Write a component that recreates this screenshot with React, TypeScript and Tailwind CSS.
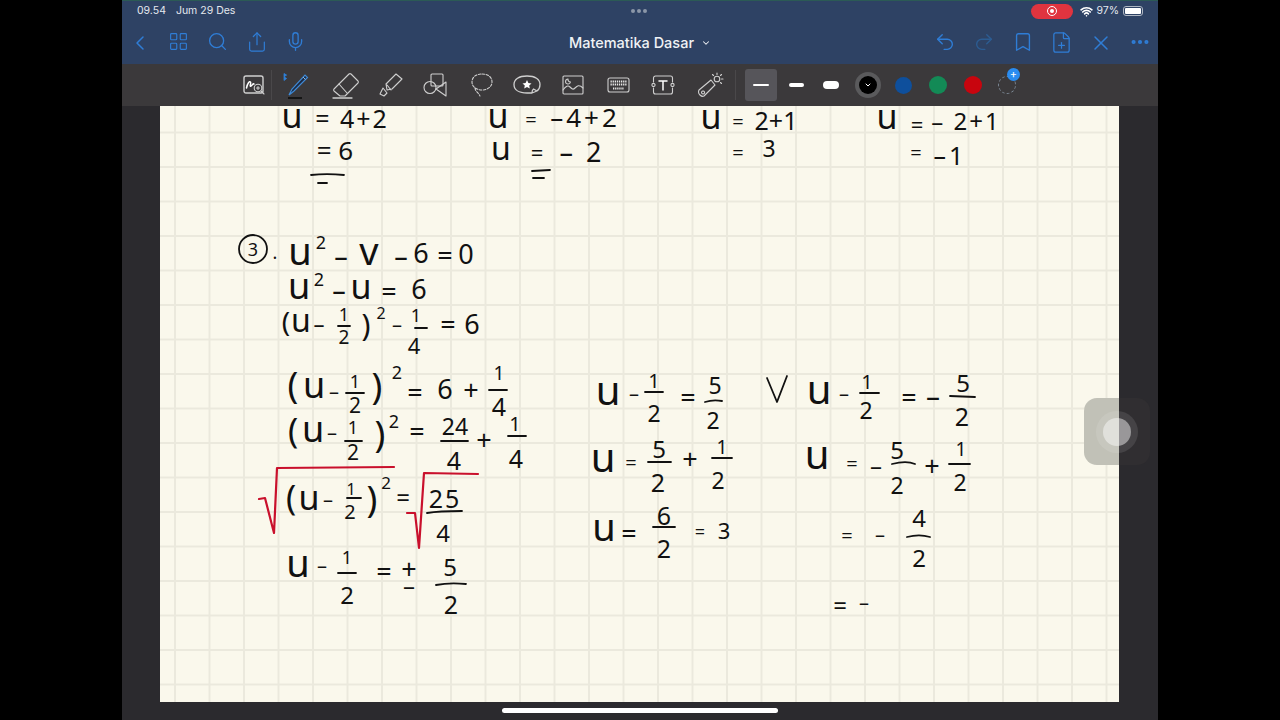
import type { ReactNode } from "react";
import { Bookmark, ChevronDown, ChevronLeft, Ellipsis, FilePlus, LayoutGrid, Mic, Redo2, Search, Share, Undo2, Wifi, X } from "lucide-react";

// one handwritten piece on the note, placed by its centre
function T({ c, children }: { c: string; children: ReactNode }) {
  return <span className={"absolute -translate-x-1/2 -translate-y-1/2 leading-none whitespace-nowrap " + c}>{children}</span>;
}

function NavSlot({ children }: { children: ReactNode }) {
  return <div className="flex w-[39px] justify-center">{children}</div>;
}

function ToolIcons() {
  const s = { fill: "none", stroke: "#cfcfcf", strokeWidth: 1.1, strokeLinecap: "round", strokeLinejoin: "round" } as const;
  return (
    <div className="flex h-[42px] items-center bg-[#3b393b] pl-[122px]">
      {/* zoom box */}
      <svg width="22" height="22" viewBox="0 0 22 22" className="ml-[-1px]" {...s}>
        <rect x="1" y="2" width="19" height="17" rx="2" strokeWidth="1.4" />
        <path d="M3.5 14c1-5 3-7 4-6s-1.5 5 .5 4 2-3 3-2" stroke="#fff" strokeWidth="1.5" />
        <circle cx="15" cy="14" r="3.8" fill="#3b393b" />
        <path d="M13.5 14h3M15 12.5v3M18 17l3 3" />
      </svg>
      <div className="ml-[6px] h-[30px] w-px bg-[#4a484a]" />
      {/* pen */}
      <svg width="30" height="30" viewBox="0 0 30 30" className="ml-[9px]" fill="none">
        <path d="M3 3.500v7l2.600-2-2.600-1.800 2.600-1.600z" fill="#2f80d8" stroke="#2f80d8" strokeWidth="0.8" />
        <path d="M8 25 11 19 24 5l2.500 2.500L13 21z" fill="#1b2a44" stroke="#3f8ad6" strokeWidth="1.2" />
        <path d="M22 7l2.500 2.500" stroke="#8fb8e0" strokeWidth="1" />
        <path d="M7 28h14" stroke="#0d0d0d" strokeWidth="1.6" />
      </svg>
      {/* eraser */}
      <svg width="28" height="28" viewBox="0 0 28 28" className="ml-[21px]" {...s}>
        <path d="M2 18 17 3a1.500 1.500 0 0 1 2 0l7 7a1.500 1.500 0 0 1 0 2L13 25H8l-6-5a1.500 1.500 0 0 1 0-2z" />
        <path d="M7 13l8 9" />
        <path d="M1 27h19" strokeWidth="1.3" />
      </svg>
      {/* highlighter */}
      <svg width="26" height="26" viewBox="0 0 26 26" className="ml-[18px]" {...s}>
        <path d="M8 12 18 2l6 5-10 10-5 1zM9 13l4 5M5 16l4 5-3 3-4-2z" />
      </svg>
      {/* shapes */}
      <svg width="25" height="24" viewBox="0 0 25 24" className="ml-[19px]" {...s}>
        <rect x="8" y="1" width="12" height="12" rx="1" />
        <circle cx="7" cy="14.500" r="6" />
        <path d="M23 9v14l-10-7z" />
      </svg>
      {/* lasso */}
      <svg width="24" height="26" viewBox="0 0 24 26" className="ml-[22px]" {...s} strokeDasharray="2.5 1.6">
        <path d="M12 2c6 0 10 3 10 8s-5 8-10 8-10-3-10-8 4-8 10-8zM5 16c0 3 3 4 5 8" />
      </svg>
      {/* sticker */}
      <svg width="28" height="22" viewBox="0 0 28 22" className="ml-[19px]" {...s}>
        <path d="M24 17c2-1.500 3-4 3-6.500C27 5 22 2 14 2S1 5 1 10.500 6 19 14 19h5zM24 17l-5 2c0-2 0-3 1.500-4z" strokeWidth="1.3" />
        <path d="m14 6 1.400 3 3.100.4-2.300 2.100.6 3.100-2.800-1.500-2.800 1.500.6-3.100-2.300-2.100 3.100-.4z" fill="#fff" stroke="none" />
      </svg>
      {/* image */}
      <svg width="22" height="20" viewBox="0 0 22 20" className="ml-[21px]" {...s}>
        <rect x="1" y="1" width="20" height="18" rx="1" />
        <path d="M1 15c3-4 5-5 7-3s3 3 5 1 4-4 8 0M6 4a2.500 2.500 0 1 0 2.500 3A2.500 2.500 0 0 1 6 4z" />
      </svg>
      {/* keyboard */}
      <svg width="23" height="16" viewBox="0 0 23 16" className="ml-[23px]" {...s}>
        <rect x="1" y="1" width="21" height="14" rx="2" />
        <path d="M3.500 4.500h16M3.500 7.500h16M6 11.500h11" stroke="#e8e8e8" strokeWidth="1.8" strokeDasharray="1.3 .8" strokeLinecap="butt" />
      </svg>
      {/* text box */}
      <svg width="24" height="20" viewBox="0 0 24 20" className="ml-[21px]" {...s}>
        <path d="M2.500 7V3a2 2 0 0 1 2-2h15a2 2 0 0 1 2 2v4M2.500 13v4a2 2 0 0 0 2 2h15a2 2 0 0 0 2-2v-4" />
        <circle cx="2.500" cy="10" r="1.600" />
        <circle cx="21.500" cy="10" r="1.600" />
        <path d="M8 6h8M12 6v9" stroke="#fff" strokeWidth="1.5" />
      </svg>
      {/* laser */}
      <svg width="27" height="26" viewBox="0 0 27 26" className="ml-[22px]" {...s}>
        <path d="M2 18 14 8l4 5L7 24c-2 1-3 0-4-1s-2-3-1-5zM6 19a1.500 1.500 0 1 0 .1 0z" />
        <circle cx="20" cy="7" r="2.800" />
        <path d="M20 1v1.500M26 7h-1.500M24.500 2.500l-1 1M24.500 11.500l-1-1M15.500 2.500l1 1" />
      </svg>
      <div className="ml-[11px] h-[30px] w-px bg-[#4a484a]" />
      {/* stroke widths */}
      <div className="ml-[9px] flex h-[32px] w-[32px] items-center justify-center rounded-[3px] bg-[#56555a]">
        <div className="h-[2px] w-[16px] rounded-full bg-white" />
      </div>
      <div className="ml-[12px] h-[4px] w-[15px] rounded-full bg-white" />
      <div className="ml-[19px] h-[8px] w-[16px] rounded-full bg-white" />
      {/* colours */}
      <div className="ml-[16px] flex h-[26px] w-[26px] items-center justify-center rounded-full bg-[#5a5a5c]">
        <div className="flex h-[18px] w-[18px] items-center justify-center rounded-full bg-black">
          <ChevronDown size={8} strokeWidth={3} className="text-white" />
        </div>
      </div>
      <div className="ml-[14px] h-[17px] w-[17px] rounded-full bg-[#0e4f9c]" />
      <div className="ml-[17px] h-[18px] w-[18px] rounded-full bg-[#138a56]" />
      <div className="ml-[17px] h-[18px] w-[18px] rounded-full bg-[#c8050e]" />
      <div className="relative ml-[16px] h-[18px] w-[18px] rounded-full border border-dashed border-[#7d8996]">
        <div className="absolute left-[8px] top-[-9px] flex h-[13px] w-[13px] items-center justify-center rounded-full bg-[#2a8cf0] text-[11px] leading-none text-white">+</div>
      </div>
    </div>
  );
}

function Note() {
  return (
    <div className="relative h-[596px] w-[959px] overflow-hidden bg-[#faf8ec] bg-[linear-gradient(to_right,#ebe9dd_2px,transparent_2px),linear-gradient(to_bottom,#ebe9dd_2px,transparent_2px)] bg-[size:34.5px_34.5px] bg-[position:14px_-9px]">
      {/* layer uses the coordinates of the whole screen */}
      <div className="absolute left-[-160px] top-[-106px] h-[720px] w-[1280px] font-['Noto_Sans',sans-serif] text-[27px] text-[#111]">
        <svg width="1280" height="720" viewBox="0 0 1280 720" fill="none" className="absolute left-0 top-0" strokeLinecap="round" strokeLinejoin="round">
          <g stroke="#111" strokeWidth="1.8">
            <circle cx="253" cy="249" r="14" />
            <path d="M311 175c10-1 22-1 33 0M318 183h9M532 171l18-1M533 178h11" />
            <path d="M338 326h12M415 328h12" />
            <path d="M346 393h18M489 390h18M345 441h17M441 441h27M508 436h18M347 498h14M427 513c12-2 24-2 35-2M338 573h18M436 585c10-2 20-2 30-1" />
            <path d="M645 392h18M705 402c6-2 12-2 17-1M860 393h19M950 396l25 1M648 462h23M712 458h20M892 464c8-2 16-3 23 0M949 464h21M653 527h22M907 537c8-2 16-2 23 0" />
            <path d="M767 378l10 24 10-26" />
          </g>
          <path d="M259 499l6-1 9 35 3-65 117-1M407 513h8l4 35 5-75 54 1" stroke="#c9102c" strokeWidth="2.2" />
        </svg>

        {/* top rows */}
        <T c="left-[292px] top-[115px] text-[34px]">u</T>
        <T c="left-[352px] top-[118px] text-[25px] tracking-[2px]">= 4+2</T>
        <T c="left-[335px] top-[150px] text-[26px]">= 6</T>
        <T c="left-[498px] top-[115px] text-[34px]">u</T>
        <T c="left-[531px] top-[120px] text-[20px]">=</T>
        <T c="left-[585px] top-[117px] text-[26px] tracking-[3px]">–4+2</T>
        <T c="left-[501px] top-[148px] text-[32px]">u</T>
        <T c="left-[537px] top-[152px] text-[22px]">=</T>
        <T c="left-[582px] top-[151px] text-[27px] tracking-[3px]">– 2</T>
        <T c="left-[711px] top-[116px] text-[34px]">u</T>
        <T c="left-[738px] top-[122px] text-[20px]">=</T>
        <T c="left-[776px] top-[120px] text-[25px]">2+1</T>
        <T c="left-[738px] top-[153px] text-[20px]">=</T>
        <T c="left-[769px] top-[148px] text-[23px]">3</T>
        <T c="left-[887px] top-[116px] text-[34px]">u</T>
        <T c="left-[917px] top-[124px] text-[22px]">=</T>
        <T c="left-[966px] top-[121px] text-[24px] tracking-[2px]">– 2+1</T>
        <T c="left-[916px] top-[153px] text-[20px]">=</T>
        <T c="left-[950px] top-[155px] text-[25px] tracking-[3px]">–1</T>

        {/* problem 3 */}
        <T c="left-[253px] top-[249px] text-[18px]">3</T>
        <T c="left-[275px] top-[252px] text-[18px]">.</T>
        <T c="left-[300px] top-[250px] text-[38px]">u</T>
        <T c="left-[321px] top-[242px] text-[18px]">2</T>
        <T c="left-[341px] top-[255px]">–</T>
        <T c="left-[369px] top-[250px] text-[38px]">v</T>
        <T c="left-[401px] top-[255px]">–</T>
        <T c="left-[421px] top-[252px]">6</T>
        <T c="left-[445px] top-[254px]">=</T>
        <T c="left-[466px] top-[253px]">0</T>

        <T c="left-[299px] top-[286px] text-[36px]">u</T>
        <T c="left-[319px] top-[279px] text-[18px]">2</T>
        <T c="left-[339px] top-[289px]">–</T>
        <T c="left-[361px] top-[286px] text-[34px]">u</T>
        <T c="left-[389px] top-[290px]">=</T>
        <T c="left-[419px] top-[288px]">6</T>

        <T c="left-[286px] top-[321px] text-[28px]">(</T>
        <T c="left-[301px] top-[320px] text-[32px]">u</T>
        <T c="left-[319px] top-[323px] text-[22px]">–</T>
        <T c="left-[344px] top-[314px] text-[18px]">1</T>
        <T c="left-[344px] top-[337px] text-[19px]">2</T>
        <T c="left-[366px] top-[325px] text-[30px]">)</T>
        <T c="left-[381px] top-[313px] text-[16px]">2</T>
        <T c="left-[397px] top-[325px] text-[20px]">–</T>
        <T c="left-[416px] top-[315px] text-[18px]">1</T>
        <T c="left-[414px] top-[345px] text-[22px]">4</T>
        <T c="left-[448px] top-[323px]">=</T>
        <T c="left-[472px] top-[323px]">6</T>

        <T c="left-[293px] top-[385px] text-[36px]">(</T>
        <T c="left-[314px] top-[385px] text-[36px]">u</T>
        <T c="left-[334px] top-[392px] text-[20px]">–</T>
        <T c="left-[355px] top-[381px] text-[18px]">1</T>
        <T c="left-[355px] top-[405px] text-[21px]">2</T>
        <T c="left-[377px] top-[386px] text-[36px]">)</T>
        <T c="left-[397px] top-[372px] text-[18px]">2</T>
        <T c="left-[415px] top-[391px]">=</T>
        <T c="left-[445px] top-[388px]">6</T>
        <T c="left-[471px] top-[389px]">+</T>
        <T c="left-[499px] top-[373px] text-[19px]">1</T>
        <T c="left-[499px] top-[406px] text-[25px]">4</T>

        <T c="left-[293px] top-[430px] text-[34px]">(</T>
        <T c="left-[313px] top-[429px] text-[36px]">u</T>
        <T c="left-[332px] top-[433px] text-[20px]">–</T>
        <T c="left-[353px] top-[427px] text-[18px]">1</T>
        <T c="left-[353px] top-[452px] text-[21px]">2</T>
        <T c="left-[380px] top-[434px] text-[36px]">)</T>
        <T c="left-[394px] top-[421px] text-[18px]">2</T>
        <T c="left-[417px] top-[430px]">=</T>
        <T c="left-[455px] top-[426px] text-[23px]">24</T>
        <T c="left-[454px] top-[460px] text-[25px]">4</T>
        <T c="left-[484px] top-[439px]">+</T>
        <T c="left-[515px] top-[424px] text-[20px]">1</T>
        <T c="left-[516px] top-[458px] text-[25px]">4</T>

        <T c="left-[291px] top-[497px] text-[34px]">(</T>
        <T c="left-[309px] top-[497px] text-[34px]">u</T>
        <T c="left-[328px] top-[500px] text-[20px]">–</T>
        <T c="left-[351px] top-[489px] text-[16px]">1</T>
        <T c="left-[350px] top-[512px] text-[20px]">2</T>
        <T c="left-[372px] top-[499px] text-[36px]">)</T>
        <T c="left-[386px] top-[482px] text-[17px]">2</T>
        <T c="left-[403px] top-[497px] text-[24px]">=</T>
        <T c="left-[445px] top-[498px] text-[25px] tracking-[2px]">25</T>
        <T c="left-[443px] top-[533px] text-[24px]">4</T>

        <T c="left-[298px] top-[562px] text-[38px]">u</T>
        <T c="left-[322px] top-[566px] text-[20px]">–</T>
        <T c="left-[347px] top-[557px] text-[18px]">1</T>
        <T c="left-[347px] top-[595px] text-[24px]">2</T>
        <T c="left-[384px] top-[570px]">=</T>
        <T c="left-[409px] top-[568px]">+</T>
        <T c="left-[409px] top-[585px] text-[24px]">–</T>
        <T c="left-[450px] top-[567px] text-[24px]">5</T>
        <T c="left-[451px] top-[604px] text-[25px]">2</T>

        {/* right side */}
        <T c="left-[608px] top-[390px] text-[40px]">u</T>
        <T c="left-[634px] top-[394px] text-[20px]">–</T>
        <T c="left-[654px] top-[381px] text-[20px]">1</T>
        <T c="left-[654px] top-[413px] text-[23px]">2</T>
        <T c="left-[688px] top-[396px]">=</T>
        <T c="left-[715px] top-[385px] text-[23px]">5</T>
        <T c="left-[713px] top-[420px] text-[23px]">2</T>
        <T c="left-[819px] top-[389px] text-[40px]">u</T>
        <T c="left-[844px] top-[394px] text-[20px]">–</T>
        <T c="left-[867px] top-[382px] text-[20px]">1</T>
        <T c="left-[866px] top-[410px] text-[23px]">2</T>
        <T c="left-[909px] top-[396px]">=</T>
        <T c="left-[933px] top-[395px] text-[28px]">–</T>
        <T c="left-[963px] top-[383px] text-[24px]">5</T>
        <T c="left-[962px] top-[416px] text-[25px]">2</T>

        <T c="left-[603px] top-[457px] text-[40px]">u</T>
        <T c="left-[631px] top-[463px] text-[20px]">=</T>
        <T c="left-[659px] top-[449px] text-[24px]">5</T>
        <T c="left-[658px] top-[482px] text-[25px]">2</T>
        <T c="left-[690px] top-[458px]">+</T>
        <T c="left-[722px] top-[447px] text-[19px]">1</T>
        <T c="left-[718px] top-[480px] text-[23px]">2</T>
        <T c="left-[817px] top-[454px] text-[40px]">u</T>
        <T c="left-[852px] top-[464px] text-[20px]">=</T>
        <T c="left-[876px] top-[465px] text-[24px]">–</T>
        <T c="left-[897px] top-[450px] text-[24px]">5</T>
        <T c="left-[897px] top-[485px] text-[23px]">2</T>
        <T c="left-[932px] top-[465px]">+</T>
        <T c="left-[961px] top-[449px] text-[19px]">1</T>
        <T c="left-[960px] top-[482px] text-[23px]">2</T>

        <T c="left-[604px] top-[526px] text-[38px]">u</T>
        <T c="left-[629px] top-[532px]">=</T>
        <T c="left-[664px] top-[515px] text-[25px]">6</T>
        <T c="left-[664px] top-[548px] text-[25px]">2</T>
        <T c="left-[700px] top-[531px] text-[18px]">=</T>
        <T c="left-[724px] top-[530px] text-[22px]">3</T>
        <T c="left-[847px] top-[536px] text-[20px]">=</T>
        <T c="left-[880px] top-[535px] text-[20px]">–</T>
        <T c="left-[919px] top-[518px] text-[24px]">4</T>
        <T c="left-[919px] top-[558px] text-[24px]">2</T>
        <T c="left-[840px] top-[605px] text-[24px]">=</T>
        <T c="left-[864px] top-[603px] text-[20px]">–</T>
      </div>
    </div>
  );
}

export default function App() {
  return (
    <div className="flex h-[720px] w-[1280px] justify-center overflow-hidden bg-black font-['Inter',sans-serif]">
      <div className="relative flex h-[720px] w-[1036px] flex-col bg-[#2b2a2e]">
        {/* status bar */}
        <div className="relative flex h-[21px] items-center border-t border-[#2b5a55] bg-[#2e4264] pl-[15px] pr-[15px] text-[10.5px] text-[#e4e8ee]">
          <span>09.54</span>
          <span className="ml-[10px]">Jum 29 Des</span>
          <div className="absolute left-[509px] top-[8px] flex gap-[2px]">
            <div className="h-[4px] w-[4px] rounded-full bg-[#8b97a8]" />
            <div className="h-[4px] w-[4px] rounded-full bg-[#8b97a8]" />
            <div className="h-[4px] w-[4px] rounded-full bg-[#8b97a8]" />
          </div>
          <div className="ml-auto flex items-center">
            <div className="flex h-[15px] w-[42px] items-center justify-center rounded-full bg-[#e0343f]">
              <div className="flex h-[10px] w-[10px] items-center justify-center rounded-full border border-white">
                <div className="h-[4px] w-[4px] rounded-full bg-white" />
              </div>
            </div>
            <Wifi size={13} strokeWidth={3} className="ml-[7px] text-white" />
            <span className="ml-[3px]">97%</span>
            <div className="ml-[4px] flex h-[10px] w-[20px] rounded-[3px] border border-[#aeb6c2] p-px">
              <div className="w-full rounded-[1px] bg-white" />
            </div>
          </div>
        </div>

        {/* nav bar */}
        <div className="grid h-[43px] grid-cols-[1fr_auto_1fr] items-center bg-[#2e4264] text-[#2f7dd6]">
          <div className="ml-[-2px] flex">
            <NavSlot><ChevronLeft size={24} strokeWidth={1.5} /></NavSlot>
            <NavSlot><LayoutGrid size={21} strokeWidth={1.3} /></NavSlot>
            <NavSlot><Search size={21} strokeWidth={1.5} /></NavSlot>
            <NavSlot><Share size={22} strokeWidth={1.3} /></NavSlot>
            <NavSlot><Mic size={21} strokeWidth={1.5} /></NavSlot>
          </div>
          <div className="flex items-center text-[14.5px] font-medium text-[#f0f2f5]">
            Matematika Dasar
            <ChevronDown size={10} strokeWidth={2.5} className="ml-[7px]" />
          </div>
          <div className="mr-[-1px] flex justify-end">
            <NavSlot><Undo2 size={22} strokeWidth={1.5} /></NavSlot>
            <NavSlot><Redo2 size={22} strokeWidth={1.5} className="text-[#2c5c92]" /></NavSlot>
            <NavSlot><Bookmark size={22} strokeWidth={1.5} /></NavSlot>
            <NavSlot><FilePlus size={23} strokeWidth={1.3} /></NavSlot>
            <NavSlot><X size={24} strokeWidth={1.5} /></NavSlot>
            <NavSlot><Ellipsis size={22} strokeWidth={2.5} /></NavSlot>
          </div>
        </div>

        <ToolIcons />

        <div className="pl-[38px]">
          <Note />
        </div>

        {/* home indicator */}
        <div className="mx-auto mt-[6px] h-[5px] w-[276px] rounded-full bg-white" />

        {/* assistive touch */}
        <div className="absolute left-[962px] top-[398px] flex h-[67px] w-[66px] overflow-hidden rounded-[13px]">
          <div className="w-[35px] bg-[#c1c1b7]" />
          <div className="w-[31px] bg-[#302e31]" />
          <div className="absolute left-[12px] top-[13px] flex h-[42px] w-[42px] items-center justify-center rounded-full bg-white/10">
            <div className="h-[28px] w-[28px] rounded-full bg-white/45" />
          </div>
        </div>
      </div>
    </div>
  );
}
